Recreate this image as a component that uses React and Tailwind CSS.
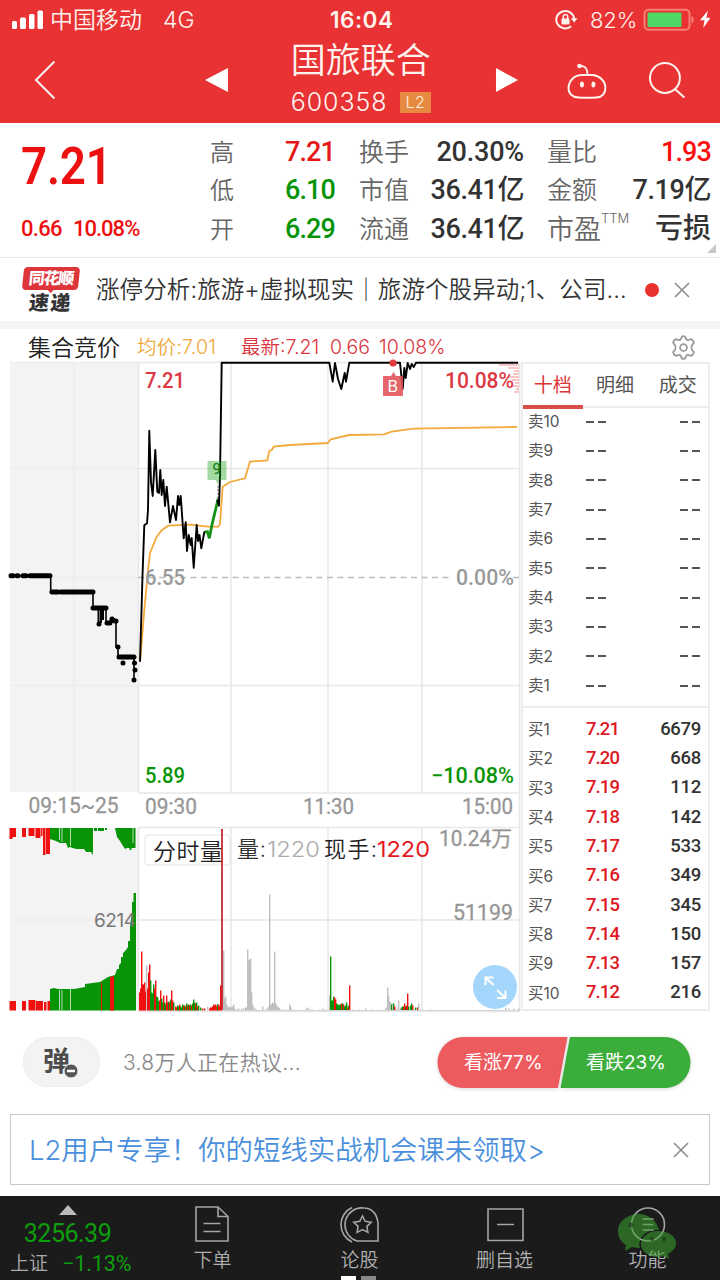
import React from 'react';

const sells = [10, 9, 8, 7, 6, 5, 4, 3, 2, 1];

const buys = [
    ['7.21', '6679'],
    ['7.20', '668'],
    ['7.19', '112'],
    ['7.18', '142'],
    ['7.17', '533'],
    ['7.16', '349'],
    ['7.15', '345'],
    ['7.14', '150'],
    ['7.13', '157'],
    ['7.12', '216'],
];

const RED = '#f01010';
const GREEN = '#079407';
const GRAY = '#c0c0c0';

// [x, height, colour] measured up from the volume baseline
const volumeBars = [
    [139.5, 18, RED], [140.5, 22, RED], [141.5, 59, RED], [142.5, 26, RED], [143.5, 26, RED], [144.5, 28, RED], [145.5, 19, RED],
    [146.5, 45, GRAY], [147.5, 22, RED], [148.5, 38, RED], [149.5, 46, RED], [150.5, 30, GREEN], [151.5, 18, GREEN], [152.5, 17, GREEN],
    [153.5, 26, GREEN], [154.5, 22, RED], [155.5, 30, RED], [156.5, 14, GREEN], [157.5, 13, GREEN], [158.5, 9, GREEN], [159.5, 10, RED],
    [160.5, 20, RED], [161.5, 12, GREEN], [162.5, 8, GREEN], [163.5, 15, RED], [164.5, 8, GREEN], [165.5, 6, GREEN], [166.5, 15, RED],
    [167.5, 8, RED], [168.5, 9, GREEN], [169.5, 8, RED], [170.5, 11, GREEN], [171.5, 20, RED], [172.5, 10, RED], [173.5, 8, GREEN],
    [175.5, 4, RED], [176.5, 3, RED], [177.5, 5, GREEN], [178.5, 4, GREEN], [179.5, 6, RED], [180.5, 4, GREEN], [181.5, 3, GREEN],
    [182.5, 6, GREEN], [183.5, 5, RED], [184.5, 5, GREEN], [185.5, 4, RED], [186.5, 7, GREEN], [187.5, 5, RED], [188.5, 6, GREEN],
    [189.5, 5, RED], [190.5, 6, GREEN], [191.5, 5, RED], [192.5, 7, GREEN], [193.5, 11, GREEN], [194.5, 8, GREEN], [195.5, 7, RED],
    [196.5, 8, GREEN], [197.5, 4, RED], [198.5, 5, GREEN], [200.5, 3, GREEN], [202.5, 2, RED], [204.5, 2, RED], [207.5, 4, GRAY],
    [209.5, 2, RED], [210.5, 3, RED], [211.5, 3, RED], [212.5, 4, RED], [213.5, 6, RED], [214.5, 5, RED], [215.5, 6, RED], [216.5, 4, RED],
    [217.5, 6, GREEN], [218.5, 6, RED], [219.5, 4, RED], [220.5, 25, RED], [221.5, 25, RED],
    [223.5, 60, GRAY], [224.5, 12, GRAY], [225.5, 14, GRAY], [226.5, 6, GRAY], [227.5, 4, GRAY], [228.5, 3, GRAY], [229.5, 4, GRAY],
    [230.5, 3, GRAY], [231.5, 3, GRAY], [232.5, 4, GRAY], [233.5, 6, GRAY], [234.5, 2, GRAY], [236.5, 1, GRAY], [238.5, 2, GRAY],
    [241.5, 2, GRAY], [243.5, 2, GRAY], [245.5, 3, GRAY], [246.5, 3, GRAY], [247.5, 61, GRAY], [248.5, 50, GRAY], [249.5, 51, GRAY],
    [250.5, 52, GRAY], [251.5, 18, GRAY], [252.5, 6, GRAY], [253.5, 3, GRAY], [255.5, 2, GRAY], [262.5, 4, GRAY], [266.5, 2, GRAY],
    [268.5, 4, GRAY], [269.5, 116, GRAY], [270.5, 6, GRAY], [271.5, 6, GRAY], [272.5, 8, GRAY], [273.5, 7, GRAY], [274.5, 59, GRAY],
    [275.5, 7, GRAY], [276.5, 5, GRAY], [277.5, 4, GRAY], [278.5, 3, GRAY], [279.5, 2, GRAY], [282.5, 1, GRAY], [285.5, 1, GRAY],
    [289.5, 6, GRAY], [290.5, 4, GRAY], [292.5, 1, GRAY], [306.5, 3, GRAY], [308.5, 2, GRAY], [311.5, 1, GRAY], [318.5, 1, GRAY],
    [322.5, 2, GRAY], [325.5, 1, GRAY], [329.5, 15, GRAY], [330.5, 54, GREEN], [331.5, 10, GREEN], [332.5, 10, GREEN],
    [333.5, 14, GREEN], [334.5, 13, RED], [335.5, 11, RED], [336.5, 7, GREEN], [337.5, 6, GREEN], [338.5, 5, GREEN], [339.5, 6, GREEN],
    [340.5, 6, GREEN], [341.5, 7, RED], [342.5, 7, GREEN], [343.5, 6, RED], [344.5, 4, GREEN], [345.5, 5, GREEN], [346.5, 8, GREEN],
    [347.5, 3, RED], [348.5, 5, GREEN], [349.5, 25, RED], [352.5, 1, GRAY], [358.5, 1, GRAY], [365.5, 2, GRAY], [371.5, 1, GRAY],
    [381.5, 1, GRAY], [385.5, 2, GRAY], [386.5, 3, GRAY], [387.5, 23, GRAY], [388.5, 15, GRAY], [389.5, 9, GRAY], [390.5, 8, GRAY],
    [391.5, 6, GREEN], [392.5, 7, GRAY], [393.5, 7, GREEN], [394.5, 4, RED], [396.5, 2, GRAY], [398.5, 10, GRAY], [400.5, 3, GRAY],
    [401.5, 3, GREEN], [402.5, 4, GREEN], [403.5, 4, RED], [404.5, 7, RED], [405.5, 4, GREEN], [406.5, 5, RED], [407.5, 17, RED],
    [408.5, 4, GREEN], [410.5, 5, GREEN], [411.5, 7, GREEN], [412.5, 5, RED], [415.5, 3, GREEN], [417.5, 3, RED], [418.5, 7, GRAY],
    [422.5, 1, GRAY], [430.5, 1, GRAY], [505.5, 3, GRAY], [508.5, 2, GRAY], [513.5, 2, GRAY], [518.5, 2, GRAY],
];

const StatusBar = () => (
    <div className="flex h-10 items-center pl-3 pr-2 text-[22px] leading-none text-[#fff3ee]">
        <svg width="33" height="20" viewBox="0 0 33 20" fill="#fff">
            <rect x="0" y="11" width="5" height="8" rx="1.5" />
            <rect x="8" y="7.5" width="6" height="11.5" rx="1.5" />
            <rect x="17" y="4" width="5.5" height="15" rx="1.5" />
            <rect x="25.5" y="0.5" width="5.5" height="18.5" rx="1.5" />
        </svg>
        <span className="ml-[5px] w-[112px] whitespace-nowrap text-[23px] font-[350]">中国移动</span>
        <span className="w-[168px] pl-px text-[23px] font-[350]">4G</span>
        <span className="w-[225px] text-[22.5px] font-semibold tracking-[0.5px]">16:04</span>
        <svg width="24" height="22" viewBox="0 0 24 22" fill="none" stroke="#fff3ee" strokeWidth="2">
            <path d="M19.2 9.5a9 8.7 0 1 0-3 7.8" />
            <path d="M15.8 9.2h6.8l-3.4 4.3z" fill="#fff3ee" stroke="none" />
            <rect x="6.5" y="9.5" width="8" height="6" rx="1" fill="#fff3ee" stroke="none" />
            <path d="M8.3 10V7.6a2.2 2.2 0 0 1 4.4 0V10" strokeWidth="1.5" />
        </svg>
        <span className="ml-[11px] w-[52px] font-[350] tracking-[-0.1px]">82%</span>
        <svg width="68" height="24" viewBox="0 0 68 24" fill="none">
            <rect x="2.5" y="1.8" width="45" height="20" rx="4" stroke="#f77f76" strokeWidth="2" />
            <rect x="5.5" y="4.5" width="34" height="14.5" rx="1" fill="#4fd964" />
            <path d="M50 8.5v6.5q3-3.2 0-6.5z" fill="#f77f76" stroke="#f77f76" />
            <path d="M66 2.5l-8 9.7h4.500l-1.300 7.800 7.300-10.200h-4.200z" fill="#fff" />
        </svg>
    </div>
);

const Header = () => (
    <div className="flex h-[83px] items-center pl-[33px] pr-[34px] text-white">
        <svg className="-mt-1" width="24" height="40" viewBox="0 0 24 40" fill="none" stroke="#fff3ee" strokeWidth="2">
            <path d="M21.5 1.5L3 20l18.5 18.5" />
        </svg>
        <svg className="-mt-1 ml-[147px]" width="26" height="26" viewBox="0 0 26 26" fill="#fff">
            <path d="M24 1v24L1 13z" />
        </svg>
        <div className="ml-[61px] w-[141px]">
            <div className="h-[42px] whitespace-nowrap text-[35px] font-[350] leading-[33px] text-[#fff3ee]">国旅联合</div>
            <div className="flex h-[34px] items-center">
                <span className="w-[109px] text-[25px] font-[350] leading-none tracking-[0.9px] text-[#fff3ee]">600358</span>
                <span className="h-[21px] w-[31px] bg-[#e68a42] text-center text-[16px] font-[350] leading-[21px] tracking-[0.5px] text-[#ffeede]">L2</span>
            </div>
        </div>
        <svg className="-mt-1 ml-[63px]" width="26" height="26" viewBox="0 0 26 26" fill="#fff">
            <path d="M2 1v24l22-12z" />
        </svg>
        <svg className="-mt-1 ml-[46px]" width="42" height="38" viewBox="0 0 42 38" fill="none" stroke="#fff3ee" strokeWidth="2">
            <circle cx="13.5" cy="5" r="2.3" fill="#fff3ee" stroke="none" />
            <path d="M13.5 5h3q5 1 5 8" strokeWidth="1.8" />
            <path d="M16 14h11c7 1 12.5 6 12.5 13 0 5-2 9-9 9.5q-9 .8-18 0C5 36 2.5 32 2.500 27 3 19 9 14 16 14z" />
            <ellipse cx="16" cy="23.5" rx="2" ry="2.9" fill="#fff3ee" stroke="none" />
            <ellipse cx="27.500" cy="23.5" rx="2" ry="2.9" fill="#fff3ee" stroke="none" />
        </svg>
        <svg className="-mt-1 ml-[40px]" width="38" height="38" viewBox="0 0 38 38" fill="none" stroke="#fff3ee" strokeWidth="2">
            <circle cx="17" cy="17" r="15" />
            <path d="M27 28l9.5 8.5" />
        </svg>
    </div>
);

const Quote = () => (
    <div className="relative flex h-[135px] border-b border-[#e9e9e9] font-['Roboto','Noto_Sans_CJK_SC',sans-serif] font-medium">
        <div className="w-[210px] pl-[21px] pt-[17px] text-[#ec1010]">
            <div className="h-[74px] origin-left scale-x-[0.88] text-[52px] font-semibold leading-[54px] tracking-[-0.2px]">7.21</div>
            <div className="flex text-[22px] leading-[30px]">
                <span className="w-[52px] tracking-[-0.7px]">0.66</span>
                <span className="tracking-[-1px]">10.08%</span>
            </div>
        </div>
        <div className="w-[125px] pt-[10px] leading-[38.4px]">
            <div className="flex h-[38.4px] justify-between"><span className="pt-px text-[24px] font-[350] text-[#666]">高</span><span className="text-[27px] tracking-[-0.9px] text-[#e61717]">7.21</span></div>
            <div className="flex h-[38.4px] justify-between"><span className="pt-px text-[24px] font-[350] text-[#666]">低</span><span className="text-[27px] tracking-[-0.9px] text-[#079407]">6.10</span></div>
            <div className="flex h-[38.4px] justify-between"><span className="pt-px text-[24px] font-[350] text-[#666]">开</span><span className="text-[27px] tracking-[-0.9px] text-[#079407]">6.29</span></div>
        </div>
        <div className="ml-[24px] w-[165px] pt-[10px] leading-[38.4px] text-[#333]">
            <div className="flex h-[38.4px] justify-between"><span className="pt-px text-[25px] font-[350] text-[#666]">换手</span><span className="text-[27px] tracking-[-0.2px]">20.30%</span></div>
            <div className="flex h-[38.4px] justify-between"><span className="pt-px text-[25px] font-[350] text-[#666]">市值</span><span className="text-[27px] tracking-[-0.4px]">36.41亿</span></div>
            <div className="flex h-[38.4px] justify-between"><span className="pt-px text-[25px] font-[350] text-[#666]">流通</span><span className="text-[27px] tracking-[-0.4px]">36.41亿</span></div>
        </div>
        <div className="ml-[23px] w-[164px] pt-[10px] leading-[38.4px] text-[#333]">
            <div className="flex h-[38.4px] justify-between"><span className="pt-px text-[25px] font-[350] text-[#666]">量比</span><span className="text-[27px] tracking-[-0.9px] text-[#fa1010]">1.93</span></div>
            <div className="flex h-[38.4px] justify-between"><span className="pt-px text-[25px] font-[350] text-[#666]">金额</span><span className="text-[27px] tracking-[-0.4px]">7.19亿</span></div>
            <div className="flex h-[38.4px] justify-between">
                <span className="flex pt-px text-[27px] font-[350] text-[#666]">市盈<span className="font-['Inter'] text-[13px] leading-[15px]">TTM</span></span>
                <span className="text-[28px] leading-[37px]">亏损</span>
            </div>
        </div>
        <svg className="absolute right-[4px] top-[121px]" width="10" height="10" viewBox="0 0 10 10"><path d="M10 0v9H1z" fill="#c8c8c8" /></svg>
    </div>
);

const CloseIcon = () => (
    <svg width="16" height="16" viewBox="0 0 16 16" fill="none" stroke="#8d8d8d" strokeWidth="1.6">
        <path d="M1 1l14 14M15 1L1 15" />
    </svg>
);

const News = () => (
    <div className="flex h-[71px] items-center border-b-8 border-[#f4f4f4] pl-[23px] text-[#333]">
        <div className="w-[73px] pt-px">
            <div className="relative h-[23px] w-[56px] -skew-x-6 rounded-sm bg-[#de353b] text-center text-[16px] font-black leading-[22px] tracking-[-1.2px] text-white">
                同花顺
                <svg className="absolute left-[25px] top-[22px]" width="8" height="4" viewBox="0 0 8 4"><path d="M0 0h8L4 4z" fill="#de353b" /></svg>
            </div>
            <div className="ml-[6px] h-[24px] -skew-x-6 text-[20px] font-black leading-[27px] tracking-[1.5px]">速递</div>
        </div>
        <div className="w-[548px] whitespace-nowrap pt-px text-[23.5px] font-[350] tracking-[0.1px]">涨停分析:旅游+虚拟现实｜旅游个股异动;1、公司...</div>
        <div className="ml-px h-[14px] w-[14px] rounded-full bg-[#e8322f]"></div>
        <div className="ml-[15px]"><CloseIcon /></div>
    </div>
);

const ChartHeader = () => (
    <div className="flex h-[33px] items-center whitespace-nowrap pl-[28px] pt-[5px] text-[19.5px]">
        <span className="w-[109px] text-[23px] font-[350] text-[#222]">集合竞价</span>
        <span className="w-[104px] font-[350] tracking-[0.2px] text-[#eda93a]">均价:7.01</span>
        <span className="w-[89px] font-[350] text-[#db3540]">最新:7.21</span>
        <span className="w-[49px] font-[350] text-[#db3540]">0.66</span>
        <span className="w-[292px] font-[350] text-[#db3540]">10.08%</span>
        <svg className="-mt-[2px]" width="25" height="25" viewBox="0 0 24 24" fill="none" stroke="#999" strokeWidth="1.7" strokeLinejoin="round">
            <path d="M9.7 3.5Q10 1 12 1T14.3 3.5Q15 5.3 17 4.7L19.5 4Q21.5 5 22 7.5L20 10Q19 12 20 14L22 16.5Q21.5 19 19.5 20L17 19.3Q15 18.7 14.3 20.5Q14 23 12 23T9.7 20.5Q9 18.7 7 19.3L4.5 20Q2.5 19 2 16.5L4 14Q5 12 4 10L2 7.5Q2.5 5 4.5 4L7 4.7Q9 5.3 9.7 3.5z" />
            <circle cx="12" cy="12" r="3.3" />
        </svg>
    </div>
);

const Chart = () => (
    <svg width="521" height="660" viewBox="0 362 521 660" className="block overflow-visible" fontFamily="Roboto, 'Noto Sans CJK SC', sans-serif">
        <rect x="10" y="362" width="128" height="430" fill="#f3f3f3" />
        <rect x="10" y="828" width="128" height="182" fill="#f3f3f3" />
        <g stroke="#e8e8e8" strokeWidth="1.5" fill="none">
            <path d="M138 362.5H520M138 793H520M138 827.5H520M138 1011.5H520M138.5 362V793M138.5 828V1011" />
            <path d="M231 362V793M328 362V793M422 362V793M519.5 362V1011M231 828V1011M328 828V1011M422 828V1011" />
            <path d="M138 468.5H520M138 685.5H520M138 920H520" />
            <path d="M10 362.5H138M10 468.5H138M10 577.5H138M10 685.5H138M10 920H138M74 362V792" stroke="#ededed" />
        </g>
        <path d="M138 577.5H453M513 577.5h6" stroke="#bdbdbd" strokeWidth="1.3" strokeDasharray="6 4.5" />

        {/* chip distribution at the right edge */}
        <path d="M499 365h20M508 368h11M514 371h5M513 374h6M508 377h11M512 380h7M515 383h4M511 386h8M516 389h3M514 392h5" stroke="#f6b3b3" strokeWidth="1.5" />

        {/* pre-open price steps */}
        <path d="M10 575.7H50.7V592H93V608H106V622H112L113 618L116 621V647H118V657H134V680" fill="none" stroke="#000" strokeWidth="1.6" />
        <path d="M11 575.7h2M17 575.7h1M23 575.7h3M30 575.7h20M52 592h6M61 592h32M93 608h13M107 623h3M112 619v1M115 621h1M118 647v0M119 657h15M123 663v0M134.5 663v0M135 670v0M134 680v0M99 624v0" stroke="#000" strokeWidth="5" strokeLinecap="round" />
        <path d="M98.5 608v16M101 608v15M103 608v12" stroke="#000" strokeWidth="2" />

        <polyline
            points="140.3,660 144.3,610 147.7,573 150,553 156.7,536.7 162,530 168.3,525.7 190,524.7 208,526.7 218.3,526.7 220,524 222.7,486.7 230,482 245,478.3 250,461.7 267.3,460.3 269.3,451 272,449.7 273.7,446.7 290,445 327.7,443 330.7,439.3 349.3,435 384,434.3 391.7,431.7 413.3,428.7 517,427"
            fill="none" stroke="#f3a93b" strokeWidth="1.8"
        />
        <polyline
            points="140,661.7 142.5,576 144.3,525.3 147,523.3 148,510 149.3,430.7 151,482 152.7,496 155.3,450 157.3,491.7 159,493 160.3,470 161.7,495 163.3,480 165,506 166.7,486.7 170,522.3 173,506 176,520 178,496 179.3,505 180.7,496 183.7,538.3 185.7,522.3 187,551 188.7,535 190.7,545 191.7,538 193.7,567.7 196.7,525 198,541 199.5,535 201.3,548.3 204.3,532.3 207.3,531.7"
            fill="none" stroke="#000" strokeWidth="1.9" strokeLinejoin="round"
        />
        <polyline points="205,532 207.5,531.7 209.3,538.3 212.3,523.3 218.3,498.3" fill="none" stroke="#159215" strokeWidth="2.8" />
        <path d="M218 486v12" stroke="#555" strokeDasharray="1.5 2" />
        <polyline
            points="217.3,500 219,505.7 220,476 221.7,362.7 329.3,362.7 332.7,381.7 335,363 338,379 341.3,389 344.7,373 346,381.7 349.3,362.7 400,362.7 402.7,389 404.3,368 405.7,378 407.7,363 410,369 411.7,364 413.7,367 416,362.7 518,362.7"
            fill="none" stroke="#000" strokeWidth="1.9" strokeLinejoin="round"
        />

        <path d="M207.5 461h19v19h-7l-2 4-2-4h-8z" fill="#18a018" fillOpacity="0.4" />
        <text x="212.5" y="474" fontSize="15" fill="#0a7a0a">9</text>
        <circle cx="393" cy="363" r="3.6" fill="#e03c40" />
        <path d="M384 376h7l2.5-4 2.5 4h6q1 0 1 1v18q0 1-1 1h-18q-1 0-1-1v-18q0-1 1-1z" fill="#e05055" fillOpacity="0.88" />
        <text x="387.5" y="392" fontSize="16" fill="#fff" fontFamily="Inter">B</text>

        <g fontSize="21.5" fontWeight="500">
            <text x="145" y="387.5" textLength="40" lengthAdjust="spacingAndGlyphs" fill="#dc3844">7.21</text>
            <text x="445" y="387.5" textLength="69" lengthAdjust="spacingAndGlyphs" fill="#dc3844">10.08%</text>
            <text x="145" y="585" textLength="40" lengthAdjust="spacingAndGlyphs" fill="#999">6.55</text>
            <text x="456" y="585" textLength="58" lengthAdjust="spacingAndGlyphs" fill="#999">0.00%</text>
            <text x="145" y="783" textLength="40" lengthAdjust="spacingAndGlyphs" fill="#079407">5.89</text>
            <text x="431" y="783" textLength="83" lengthAdjust="spacingAndGlyphs" fill="#079407">−10.08%</text>
        </g>
        <g fontSize="21.5" fill="#969696" stroke="#969696" strokeWidth="0.3">
            <text x="28.5" y="812.5" textLength="90" lengthAdjust="spacingAndGlyphs">09:15~25</text>
            <text x="145" y="813.5" textLength="52" lengthAdjust="spacingAndGlyphs">09:30</text>
            <text x="303" y="813.5" textLength="51" lengthAdjust="spacingAndGlyphs">11:30</text>
            <text x="462" y="813.5" textLength="51" lengthAdjust="spacingAndGlyphs">15:00</text>
            <text x="439" y="846" textLength="73" lengthAdjust="spacingAndGlyphs">10.24万</text>
            <text x="453" y="919.5" textLength="60" lengthAdjust="spacingAndGlyphs">51199</text>
        </g>

        {/* pre-open volume, matched on the bottom and unmatched hanging from the top */}
        <path d="M9.5 828H16v9h-3l-1 2H9.5zM22 828h4v9h-4zM28.5 828h6v8h-6zM35.5 828h5v10h-5zM41 828h1.5v8H41zM43 828h2.5v27H43zM46 828h4v26h-4z" fill={RED} />
        <path d="M50 828H93V855L91 852H86L84 849H76L70 847L68 848L66 843H60L56 841L50 839zM94 828h3v3h-3zM98 828h6v3h-6zM105 828h2v2h-2zM115 828H135.5V848H131.5V850H129.5V848H127L125 849L123 846L120 841L117 837z" fill={GREEN} />
        <path d="M59.5 828v12M62 828v14M70.5 828v18M133 828v15" stroke="#b5dfb5" />
        <path d="M9.5 1001H16v9.5H9.5zM22 1001h4v9.5h-4zM28.5 1000h7v10.5h-7zM36 1001h7v9.5h-7zM44 1002h2.5v8.5H44zM47.5 1001h2.5v9.5h-2.5z" fill={RED} />
        <path d="M50 1010.5V989L54 988L58 989H74L85 987V984L100 982L108 977L115 975L117 969H119V965L121 963V957H123V953L126 950L128 947V941H130V926L132 912V902H133.5V893H136V1010.5z" fill={GREEN} />
        <path d="M59.5 990v20M62 990v20M70.5 989v21" stroke="#b5dfb5" />
        <path d="M101.5 983v27.5" stroke={RED} />
        <path d="M110 977l4-1v34.5h-4z" fill={RED} />
        <text x="94" y="926.5" fontSize="19" textLength="42" fill="#777" fontFamily="Inter">6214</text>

        <rect x="145" y="835" width="85" height="30" rx="3" fill="#fff" fillOpacity="0.7" stroke="#e5e5e5" />
        <text x="153" y="859.5" fontSize="23" fontWeight="350" fill="#222" textLength="70">分时量</text>
        <g fontSize="22" fontFamily="Inter, 'Noto Sans CJK SC', sans-serif" fontWeight="350">
            <text x="237" y="857" fill="#333" textLength="29">量:</text>
            <text x="267" y="857" fill="#aaa" textLength="53" lengthAdjust="spacingAndGlyphs">1220</text>
            <text x="324" y="857" fill="#222" textLength="53">现手:</text>
            <text x="377" y="857" fill="#e8171f" fontWeight="400" textLength="53" lengthAdjust="spacingAndGlyphs">1220</text>
        </g>

        {volumeBars.map(([x, h, color]) => (
            <rect key={x} x={x - 0.5} y={1010.5 - h} width="1.4" height={h} fill={color} />
        ))}
        <path d="M222 829V1010" stroke="#c52a30" strokeWidth="1.8" />
        <path d="M224 1010.5H520" stroke="#d3d3d3" />

        <circle cx="495" cy="987" r="22" fill="#a4d6fb" />
        <path d="M485.5 985v-7.5h8M485.5 977.5l8 7.5M505.5 990.5v7.5h-8.5M505.5 998l-8.5-8" fill="none" stroke="#fff" strokeWidth="2" />
    </svg>
);

const OrderBook = () => (
    <div className="h-[649px] w-[189px] border-2 border-[#ededed]">
        <div className="flex h-[44px] border-b-2 border-[#ededed] text-[19px] leading-[43px] text-[#555]">
            <div className="h-[45px] w-[60px] border-b-4 border-[#d9504b] text-center text-[#df3437]">十档</div>
            <div className="w-[65px] text-center">明细</div>
            <div className="w-[61px] text-center">成交</div>
        </div>
        <div className="-mt-px h-[301px] border-b-2 border-[#ededed]">
            {sells.map((n) => (
                <div key={n} className="flex h-[29.35px] items-center pl-[5px] pr-[8px] text-[15.5px] text-[#555]">
                    <span className="w-[58px]">卖{n}</span>
                    <span className="flex w-[20px] justify-between"><i className="h-[2px] w-2 bg-[#555]"></i><i className="h-[2px] w-2 bg-[#555]"></i></span>
                    <span className="ml-auto flex w-[20px] justify-between"><i className="h-[2px] w-2 bg-[#555]"></i><i className="h-[2px] w-2 bg-[#555]"></i></span>
                </div>
            ))}
        </div>
        <div className="pt-[7px]">
            {buys.map(([price, amount], i) => (
                <div key={price} className="flex h-[29.3px] items-center pl-[5px] pr-[7px] text-[15.5px] text-[#555]">
                    <span className="w-[58px]">买{i + 1}</span>
                    <span className="font-['Roboto'] text-[18.5px] font-medium tracking-[-0.9px] text-[#e0181f]">{price}</span>
                    <span className="ml-auto font-['Roboto'] text-[18.5px] font-medium tracking-[-0.3px] text-[#333]">{amount}</span>
                </div>
            ))}
        </div>
    </div>
);

const Discussion = () => (
    <div className="flex h-[92px] items-center pl-[23px]">
        <div className="relative h-[50px] w-[77px] rounded-full border border-[#ececec] bg-[#f3f3f3] pl-[19px] text-[27px] font-bold leading-[47px] text-[#4c4c4c]">
            弹
            <svg className="absolute left-[39px] top-[25px]" width="16" height="16" viewBox="0 0 16 16">
                <circle cx="8" cy="8" r="7" fill="#555" stroke="#f3f3f3" />
                <path d="M4 8h8" stroke="#fff" strokeWidth="2.5" />
            </svg>
        </div>
        <span className="ml-[23px] w-[314px] pt-[2px] text-[21px] font-[350] tracking-[0.3px] text-[#888]">3.8万人正在热议...</span>
        <div className="relative flex h-[51px] w-[254px] text-[19px] leading-[52px] text-white">
            <svg className="absolute inset-0 overflow-visible" width="254" height="51" viewBox="0 0 254 51">
                <path d="M26 0H130.5L121 51H26A25.5 25.5 0 0 1 26 0z" fill="#ee5b5f" className="drop-shadow-sm" />
                <path d="M133 0H228A25.5 25.5 0 0 1 228 51H123.5z" fill="#3bad3b" className="drop-shadow-sm" />
            </svg>
            <span className="relative w-[149px] pl-[27px]">看涨77%</span>
            <span className="relative">看跌23%</span>
        </div>
    </div>
);

const NavItem = ({ label, children }) => (
    <div className="flex w-[145px] flex-col items-center pt-[10px] text-[19px] font-[350] leading-[34px] text-[#b0b0b0]">
        <svg width="40" height="38" viewBox="0 0 40 38" fill="none" stroke="#a5a5a5" strokeWidth="1.6">{children}</svg>
        {label}
    </div>
);

const BottomNav = () => (
    <div className="relative flex h-[84px] bg-[#1b1b1b]">
        <div className="flex w-[140px] flex-col items-center pt-[9px] font-['Roboto','Noto_Sans_CJK_SC',sans-serif] text-[#0d9e0d]">
            <svg className="-ml-[5px]" width="18" height="10" viewBox="0 0 18 10"><path d="M9 0l9 10H0z" fill="#bbb" /></svg>
            <div className="-ml-[5px] h-[35px] text-[25px] leading-[38px] tracking-[-0.5px]">3256.39</div>
            <div className="flex w-full pl-[10px] text-[19px] leading-[27px]">
                <span className="w-[52px] font-[350] text-[#aaa]">上证</span>
                <span className="text-[21.5px] tracking-[-0.1px]">−1.13%</span>
            </div>
        </div>
        <NavItem label="下单">
            <path d="M3 1H25L35 10.5V35H3zM25 1V10.5H35M10.5 17.5H27.5M10.5 25.5H27.5" />
        </NavItem>
        <div className="pl-[2px]">
            <NavItem label="论股">
                <path d="M12 1.5A19 19 0 0 0 12 36M17 2.5A17 17 0 0 0 17 35H38V17C37 8 32 2 24 2Q20 1.5 17 2.5z" />
                <path d="M22.5 10l2.7 5.3 6 .9-4.3 4.2 1 6-5.4-2.8-5.4 2.8 1-6-4.3-4.2 6-.9z" />
            </NavItem>
        </div>
        <NavItem label="删自选">
            <path d="M3 3H38V34.5H3zM12 18.5H29" />
        </NavItem>
        <div className="-ml-[2px]">
            <NavItem label="功能">
                <circle cx="20" cy="18.5" r="16.5" />
                <path d="M14.5 13H25.5M14.5 18.5H25.5M14.5 24H25.5" />
            </NavItem>
        </div>
        <svg className="absolute left-[617px] top-[16px]" width="60" height="50" viewBox="0 0 60 50" fill="#3ca62f" fillOpacity="0.55">
            <path d="M22 2C10 2 1 10 1 19c0 6 3 11 8 14l-1 6 7-4q4 1 8 1c-3-10 6-19 19-18C40 9 32 2 22 2z" />
            <path d="M41 19c-10 0-17 6-17 13s7 13 17 13q3 0 6-1l5 3-1-5c5-3 8-6 8-11 0-7-8-12-18-12z" />
            <circle cx="14" cy="13" r="2.5" fill="#1b2b18" />
            <circle cx="35" cy="27" r="2.2" fill="#1b2b18" />
            <circle cx="47" cy="27" r="2.2" fill="#1b2b18" />
        </svg>
        <div className="absolute bottom-0 left-[341px] flex gap-[5px]">
            <div className="h-1 w-[15px] bg-white"></div>
            <div className="h-1 w-[15px] bg-[#888]"></div>
        </div>
    </div>
);

const App = () => {
    return (
        <div className="h-[1280px] w-[720px] overflow-hidden bg-white font-['Inter','Noto_Sans_CJK_SC',sans-serif]">
            <div className="bg-[#e93234]">
                <StatusBar />
                <Header />
            </div>
            <Quote />
            <News />
            <ChartHeader />
            <div className="flex h-[654px]">
                <Chart />
                <OrderBook />
            </div>
            <Discussion />
            <div className="mx-[10px] mb-[11px] mt-[6px] flex h-[71px] items-center justify-between border border-[#c9c9c9] pl-[18px] pr-[20px] text-[27.4px] font-[350] text-[#4a8fdc]">
                <span className="whitespace-nowrap pt-[2px]">L2用户专享！你的短线实战机会课未领取&gt;</span>
                <CloseIcon />
            </div>
            <BottomNav />
        </div>
    );
};

export default App;
